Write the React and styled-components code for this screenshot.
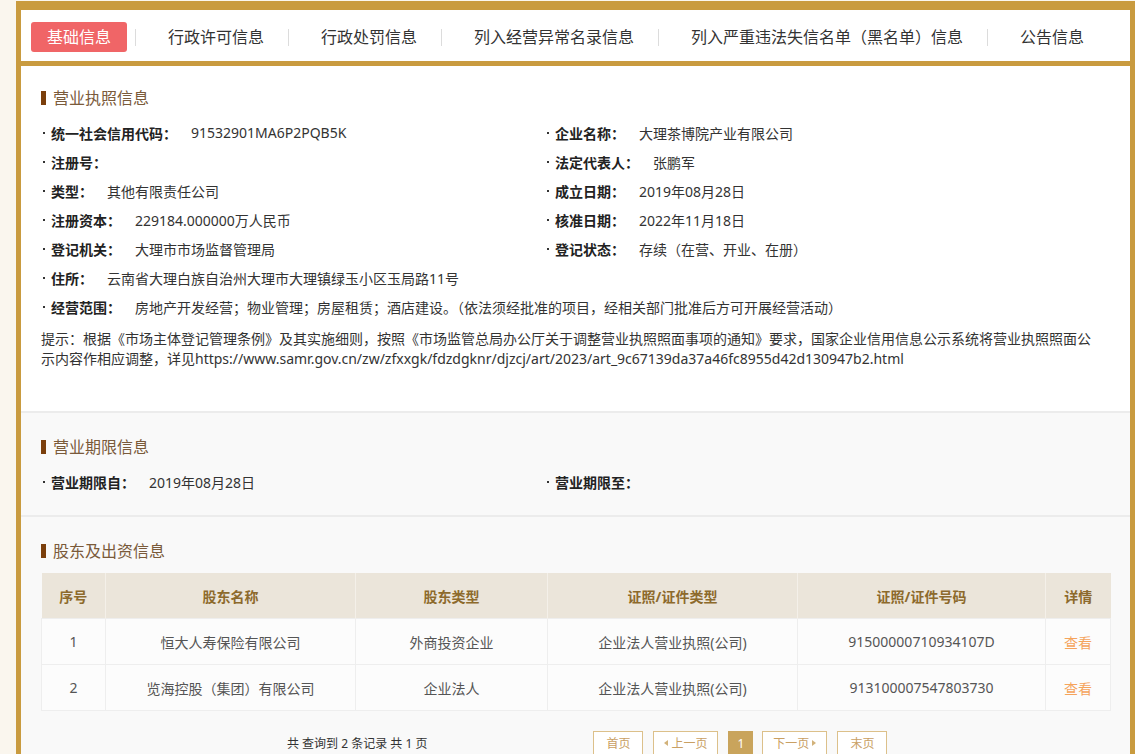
import React from 'react'
import styled, { createGlobalStyle } from 'styled-components'

const GlobalStyle = createGlobalStyle`
html, body {
  margin: 0;
  padding: 0;
  overflow: hidden;
  background: #faf6ee;
  font-family: "Noto Sans", "Noto Sans CJK SC", sans-serif;
  color: #333;
}
`

const tabs = ['基础信息', '行政许可信息', '行政处罚信息', '列入经营异常名录信息', '列入严重违法失信名单（黑名单）信息', '公告信息']

const licenseFields = [
  { label: '统一社会信用代码：', value: '91532901MA6P2PQB5K' },
  { label: '企业名称：', value: '大理茶博院产业有限公司' },
  { label: '注册号：', value: '' },
  { label: '法定代表人：', value: '张鹏军' },
  { label: '类型：', value: '其他有限责任公司' },
  { label: '成立日期：', value: '2019年08月28日' },
  { label: '注册资本：', value: '229184.000000万人民币' },
  { label: '核准日期：', value: '2022年11月18日' },
  { label: '登记机关：', value: '大理市市场监督管理局' },
  { label: '登记状态：', value: '存续（在营、开业、在册）' },
  { label: '住所：', value: '云南省大理白族自治州大理市大理镇绿玉小区玉局路11号' },
  { label: '', value: '', empty: true },
  { label: '经营范围：', value: '房地产开发经营；物业管理；房屋租赁；酒店建设。（依法须经批准的项目，经相关部门批准后方可开展经营活动）', wide: true },
]

const columns = [
  { title: '序号', width: 64 },
  { title: '股东名称', width: 250 },
  { title: '股东类型', width: 192 },
  { title: '证照/证件类型', width: 250 },
  { title: '证照/证件号码', width: 248 },
  { title: '详情', width: 65 },
]

const holders = [
  ['1', '恒大人寿保险有限公司', '外商投资企业', '企业法人营业执照(公司)', '91500000710934107D'],
  ['2', '览海控股（集团）有限公司', '企业法人', '企业法人营业执照(公司)', '913100007547803730'],
]

const Arrow = ({ dir }) => (
  <svg width="4" height="6" viewBox="0 0 4 6">
    {dir === 'left'
      ? <polygon points="4,0 4,6 0,3" fill="#d2b27a" />
      : <polygon points="0,0 0,6 4,3" fill="#d2b27a" />}
  </svg>
)

const App = () => {
  return (
    <>
      <GlobalStyle />
      <Frame>
        <TabBar>
          {tabs.map((t, i) => (
            <React.Fragment key={t}>
              {i > 0 && <TabSep />}
              <Tab $active={i === 0}>{t}</Tab>
            </React.Fragment>
          ))}
        </TabBar>

        <Section>
          <Title>营业执照信息</Title>
          <FieldGrid>
            {licenseFields.map((f, i) => (
              f.empty ? <div key={i} /> : (
                <Field key={i} $wide={f.wide}>
                  <Label>{f.label}</Label>
                  <Value>{f.value}</Value>
                </Field>
              )
            ))}
          </FieldGrid>
          <Tip>
            提示：根据《市场主体登记管理条例》及其实施细则，按照《市场监管总局办公厅关于调整营业执照照面事项的通知》要求，国家企业信用信息公示系统将营业执照照面公示内容作相应调整，详见https://www.samr.gov.cn/zw/zfxxgk/fdzdgknr/djzcj/art/2023/art_9c67139da37a46fc8955d42d130947b2.html
          </Tip>
        </Section>

        <Section $grey>
          <Title>营业期限信息</Title>
          <FieldGrid>
            <Field>
              <Label>营业期限自：</Label>
              <Value>2019年08月28日</Value>
            </Field>
            <Field>
              <Label>营业期限至：</Label>
              <Value></Value>
            </Field>
          </FieldGrid>
        </Section>

        <Section $grey $last>
          <Title>股东及出资信息</Title>
          <Table>
            <colgroup>
              {columns.map(c => <col key={c.title} style={{ width: c.width }} />)}
            </colgroup>
            <thead>
              <tr>
                {columns.map(c => <Th key={c.title}>{c.title}</Th>)}
              </tr>
            </thead>
            <tbody>
              {holders.map(row => (
                <tr key={row[0]}>
                  {row.map((cell, i) => <Td key={i}>{cell}</Td>)}
                  <Td><DetailLink>查看</DetailLink></Td>
                </tr>
              ))}
            </tbody>
          </Table>

          <Pager>
            <Summary>共 查询到 2 条记录 共 1 页</Summary>
            <PageBtn>首页</PageBtn>
            <PageBtn $arrow><Arrow dir="left" />上一页</PageBtn>
            <PageBtn $current>1</PageBtn>
            <PageBtn $arrow>下一页<Arrow dir="right" /></PageBtn>
            <PageBtn>末页</PageBtn>
          </Pager>
        </Section>
      </Frame>
    </>
  )
}

const Frame = styled.div`
box-sizing: border-box;
margin: 1px 0 0 16px;
width: 1119px;
border: 5px solid #c99b3f;
border-top-width: 9px;
border-bottom: none;
background: #fff;
`

const TabBar = styled.div`
display: flex;
align-items: center;
height: 56px;
box-sizing: border-box;
padding: 3px 10px 0;
border-bottom: 5px solid #c99b3f;
`

const Tab = styled.div`
height: 30px;
line-height: 30px;
padding: 0 16px;
font-size: 16px;
border-radius: 3px;
white-space: nowrap;
color: ${p => (p.$active ? '#fff' : '#333')};
background: ${p => (p.$active ? '#f06567' : 'transparent')};
`

const TabSep = styled.span`
width: 1px;
height: 17px;
background: #dcdcdc;
margin: 0 16px 0 8px;
`

const Section = styled.div`
padding: ${p => (p.$grey ? '24px 20px 19px' : '22px 20px 42px')};
background: ${p => (p.$grey ? '#f9f9f9' : '#fff')};
border-top: ${p => (p.$grey ? '2px solid #ececec' : 'none')};
padding-bottom: ${p => (p.$last ? '40px' : undefined)};
`

const Title = styled.h3`
display: flex;
align-items: center;
margin: 0 0 12px;
font-size: 16px;
font-weight: normal;
line-height: 20px;
color: #7a5a3a;

&::before {
  content: '';
  width: 5px;
  height: 14px;
  margin-right: 7px;
  background: #7b3f0c;
}
`

const FieldGrid = styled.div`
display: grid;
grid-template-columns: 504px 1fr;
margin-top: -2px;
`

const Field = styled.div`
grid-column: ${p => (p.$wide ? '1 / -1' : 'auto')};
display: flex;
align-items: center;
height: 29px;
font-size: 14px;
white-space: nowrap;

&::before {
  content: '';
  width: 2px;
  height: 2px;
  background: #333;
  margin: 0 6px 0 2px;
}
`

const Label = styled.span`
font-weight: bold;
color: #222;
`

const Value = styled.span`
margin-left: 14px;
color: #333;
`

const Tip = styled.p`
width: 1058px;
margin: 8px 0 0;
font-size: 14px;
line-height: 20px;
color: #333;
word-break: break-all;
`

const Table = styled.table`
width: 1069px;
border-collapse: collapse;
table-layout: fixed;
margin-top: 11px;
font-size: 14px;
`

const Th = styled.th`
height: 45px;
padding: 0;
background: #ebe5da;
color: #8d6a2c;
font-weight: bold;
border-left: 1px solid #f4f0e9;
&:first-child { border-left: none; }
`

const Td = styled.td`
height: 45px;
padding: 0;
text-align: center;
color: #555;
background: #fcfcfc;
border: 1px solid #eeeeee;
`

const DetailLink = styled.span`
color: #f5a45c;
cursor: pointer;
`

const Pager = styled.div`
display: flex;
align-items: center;
margin-top: 20px;
padding-left: 246px;
font-size: 12px;
`

const Summary = styled.span`
color: #333;
margin-right: 166px;
`

const PageBtn = styled.span`
display: inline-flex;
align-items: center;
gap: 3px;
height: 24px;
box-sizing: border-box;
padding: 0 ${p => (p.$current ? '8px' : p.$arrow ? '10px' : '12px')};
margin-right: ${p => (p.$current ? '9px' : '10px')};
border: 1px solid ${p => (p.$current ? '#c9a45c' : '#dcc08a')};
background: ${p => (p.$current ? '#c9a45c' : '#fff')};
color: ${p => (p.$current ? '#fff' : '#c9a063')};
`

export default App
